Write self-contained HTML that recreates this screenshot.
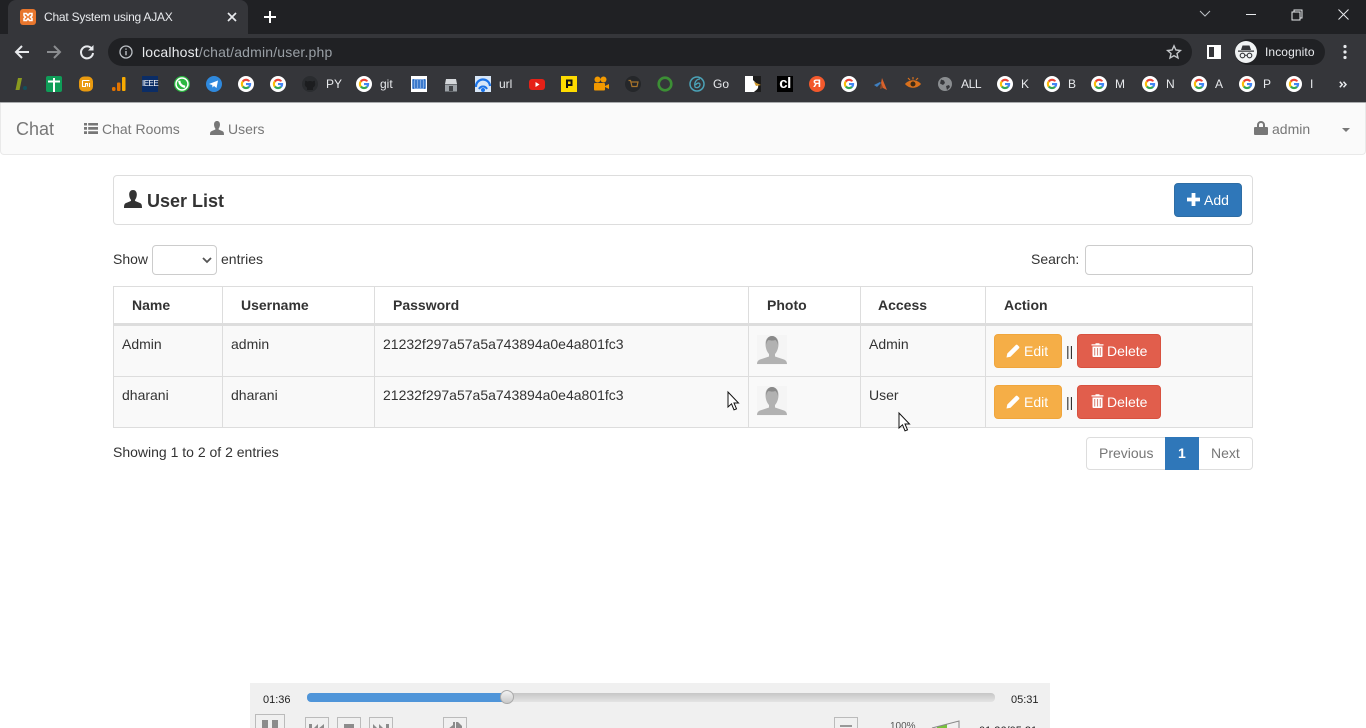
<!DOCTYPE html>
<html><head><meta charset="utf-8"><title>Chat System using AJAX</title>
<style>
*{box-sizing:border-box}
html{margin:0;padding:0;width:1366px;height:728px;overflow:hidden;background:#fff}
body{margin:0;padding:0;position:relative;width:1366px;height:728px;overflow:hidden;background:#fff;font-family:"Liberation Sans",sans-serif;font-size:14px;color:#333}
.a{position:absolute;white-space:nowrap}
.t{position:absolute;white-space:nowrap;line-height:20px}
svg{position:absolute;display:block;overflow:visible}
.bm{position:absolute;top:74px;color:#e8eaed;font-size:12px;line-height:20px;white-space:nowrap}
.th{position:absolute;top:295px;font-weight:bold;line-height:20px;color:#333}
.vl{position:absolute;width:1px;background:#ddd}
.btn{position:absolute;height:34px;border-radius:4px;color:#fff;line-height:32px;border:1px solid}
</style></head><body>
<svg width="0" height="0" style="position:absolute"><defs>
<symbol id="g" viewBox="0 0 16 16">
<circle cx="8" cy="8" r="8" fill="#fff"/>
<path d="M12.2 5A5 5 0 0 0 4 4.7L5.6 6.2A3 3 0 0 1 10.300 5.800Z" fill="#ea4335"/>
<path d="M4 4.700A5.200 5.200 0 0 0 4 11.300L5.700 9.900A3 3 0 0 1 5.600 6.200Z" fill="#fbbc05"/>
<path d="M4 11.300A5.200 5.200 0 0 0 11.800 11.500L10.100 10.100A3 3 0 0 1 5.700 9.900Z" fill="#34a853"/>
<path d="M13.100 7H8V9.100H10.900A2.700 2.700 0 0 1 10.100 10.100L11.800 11.500A5.200 5.200 0 0 0 13.100 7Z" fill="#4285f4"/>
</symbol>
<symbol id="u" viewBox="0 0 16 16"><path d="M4.600 4C4.600 1.500 6 0 8 0s3.400 1.500 3.400 4c0 2-.8 3.800-1.600 4.800-.2.500 0 .9.400 1.100l4 1.700c1.300.6 1.800 1.500 1.800 4.400H0c0-2.900.5-3.800 1.800-4.400l4-1.700c.4-.2.600-.6.400-1.100C5.400 7.800 4.600 6 4.600 4Z" fill="currentColor"/></symbol>
<symbol id="p" viewBox="0 0 30 30"><rect width="30" height="30" fill="#f5f5f5"/><path d="M8.500 9C8.500 3.500 11.500 1 15 1s6.500 2.500 6.500 8c0 4-1.500 8-3.500 10v2.500l9 3c1.500.6 3 2 3 4.500H0c0-2.500 1.500-3.900 3-4.500l9-3V19c-2-2-3.500-6-3.500-10Z" fill="#b2b2b2"/><path d="M9 10C9 4 11.500 1 15 1s6 3 6 9c-.7-3-1.700-4.500-2.700-5-2 .8-5 .8-6.700 0-1 .6-1.900 2-2.600 5Z" fill="#8a8a8a"/></symbol>
<symbol id="pen" viewBox="0 0 14 14"><path d="M.5 13.500l.8-4L9.800 1c.5-.5 1.200-.5 1.700 0l1.500 1.500c.5.500.5 1.200 0 1.700L4.500 12.700Z" fill="#fff"/></symbol>
<symbol id="tr" viewBox="0 0 13 14"><path d="M4.500 1.200V.3h4v.9h4v1.300H.5V1.200ZM1.500 3.500h10V13a1 1 0 0 1-1 1h-8a1 1 0 0 1-1-1Z" fill="#fff"/><path d="M3.700 5v7.500M6.500 5v7.500M9.300 5v7.500" stroke="#d9887c" stroke-width="1.100"/></symbol>
</defs></svg>

<!-- tab strip -->
<div class="a" style="left:0;top:0;width:1366px;height:34px;background:#202124"></div>
<div class="a" style="left:8px;top:0;width:240px;height:34px;background:#35363a;border-radius:8px 8px 0 0"></div>
<div class="a" style="left:20px;top:9px;width:16px;height:16px;background:#e8762d;border-radius:3px"></div>
<svg style="left:20px;top:9px" width="16" height="16"><path d="M4 4.500h2.500L8 6.500l1.500-2H12v2.300L10.500 8l1.500 1.500v2H9.500L8 9.500l-1.500 2H4V9.500L5.500 8 4 6.800Z" fill="none" stroke="#fff" stroke-width="1.500"/></svg>
<div class="t" style="left:44px;top:7px;font-size:12px;color:#e8eaed;letter-spacing:-.22px">Chat System using AJAX</div>
<svg style="left:227px;top:12px" width="10" height="10"><path d="M1 1l8 8M9 1l-8 8" stroke="#e8eaed" stroke-width="1.700"/></svg>
<svg style="left:264px;top:11px" width="12" height="12"><path d="M6 0v12M0 6h12" stroke="#fff" stroke-width="2"/></svg>
<svg style="left:1199px;top:10px" width="12" height="8"><path d="M1 1l5 5 5-5" fill="none" stroke="#bdc1c6" stroke-width="1"/></svg>
<div class="a" style="left:1246px;top:14px;width:10px;height:1px;background:#e8eaed"></div>
<svg style="left:1291px;top:9px" width="12" height="12"><path d="M3 2.500V1h8v8H9.500M1 3h8v8H1Z" fill="none" stroke="#e8eaed" stroke-width="1"/></svg>
<svg style="left:1338px;top:9px" width="11" height="11"><path d="M.5.500l10 10M10.500.500l-10 10" stroke="#e8eaed" stroke-width="1"/></svg>

<!-- toolbar -->
<div class="a" style="left:0;top:34px;width:1366px;height:68px;background:#35363a"></div>
<svg style="left:14px;top:44px" width="16" height="16"><path d="M15 8H2M8 2L2 8l6 6" fill="none" stroke="#e8eaed" stroke-width="2"/></svg>
<svg style="left:46px;top:44px" width="16" height="16"><path d="M1 8h13M8 2l6 6-6 6" fill="none" stroke="#8b8d90" stroke-width="2"/></svg>
<svg style="left:79px;top:44px" width="16" height="16"><path d="M13 5A6 6 0 1 0 14 9" fill="none" stroke="#e8eaed" stroke-width="2"/><path d="M14.500 1v5.500H9Z" fill="#e8eaed"/></svg>
<div class="a" style="left:108px;top:38px;width:1084px;height:28px;background:#202124;border-radius:14px"></div>
<svg style="left:119px;top:45px" width="14" height="14"><circle cx="7" cy="7" r="6" fill="none" stroke="#bdc1c6" stroke-width="1.300"/><path d="M7 6v4.300M7 3.500v1.300" stroke="#bdc1c6" stroke-width="1.400"/></svg>
<div class="t" style="left:142px;top:42px;font-size:14px;color:#9aa0a6;letter-spacing:.18px"><span style="color:#e8eaed">localhost</span>/chat/admin/user.php</div>
<svg style="left:1166px;top:44px" width="16" height="16"><path d="M8 1.800l1.900 4.200 4.500.5-3.400 3 1 4.500L8 11.700 4 14l1-4.500-3.400-3 4.500-.5Z" fill="none" stroke="#c4c7ca" stroke-width="1.400"/></svg>
<div class="a" style="left:1207px;top:45px;width:14px;height:14px;border:2px solid #fff;border-right-width:7px;background:#35363a"></div>
<div class="a" style="left:1235px;top:39px;width:90px;height:26px;background:#202124;border-radius:13px"></div>
<div class="a" style="left:1235px;top:41px;width:22px;height:22px;background:#f1f3f4;border-radius:50%"></div>
<svg style="left:1238px;top:45px" width="16" height="14"><path d="M3 5l1.500-4.500h7L13 5ZM0 5.500h16v1.300H0Z" fill="#35363a"/><circle cx="4.500" cy="10.500" r="2.300" fill="none" stroke="#35363a" stroke-width="1.100"/><circle cx="11.500" cy="10.500" r="2.300" fill="none" stroke="#35363a" stroke-width="1.100"/><path d="M6.800 10.300h2.400" stroke="#35363a"/></svg>
<div class="t" style="left:1265px;top:42px;font-size:12px;color:#e8eaed;letter-spacing:.1px">Incognito</div>
<svg style="left:1343px;top:44px" width="4" height="16"><circle cx="2" cy="2.500" r="1.600" fill="#e8eaed"/><circle cx="2" cy="8" r="1.600" fill="#e8eaed"/><circle cx="2" cy="13.500" r="1.600" fill="#e8eaed"/></svg>

<!-- bookmarks -->
<svg style="left:14px;top:76px" width="16" height="16"><path d="M4 2h4L5.500 14h-4Z" fill="#8a9a1f"/><circle cx="11" cy="12" r="2" fill="#134f5c"/></svg>
<div class="a" style="left:46px;top:76px;width:16px;height:16px;background:#0f9d58;border-radius:2px"></div>
<svg style="left:46px;top:76px" width="16" height="16"><path d="M2 5.500h12M8 2v14" stroke="#fff" stroke-width="2"/></svg>
<svg style="left:79px;top:76px" width="15" height="16"><rect x="0" y="0.500" width="14" height="15" rx="5" fill="#e99a0f"/><path d="M3.500 4.500h7M3.500 4.500v6h3v-3h2v3M10.500 7v4" fill="none" stroke="#fff" stroke-width="1.100"/></svg>
<svg style="left:111px;top:76px" width="16" height="16"><rect x="1" y="11" width="3.500" height="4" rx="1.500" fill="#e37400"/><rect x="6" y="6.500" width="3.500" height="8.500" rx="1" fill="#e37400"/><rect x="11" y="1" width="3.500" height="14" rx="1" fill="#f9ab00"/></svg>
<div class="a" style="left:142px;top:76px;width:16px;height:16px;background:#0b2d66;color:#fff;font-size:8px;line-height:16px;text-align:center;letter-spacing:-.5px">IEEE</div>
<svg style="left:174px;top:76px" width="16" height="16"><circle cx="8" cy="8" r="8" fill="#2bb741"/><circle cx="8" cy="8" r="6" fill="none" stroke="#fff" stroke-width="1.500"/><path d="M5.300 4.800c0 3.200 2.700 5.900 5.900 5.900" stroke="#fff" stroke-width="2.200" fill="none"/></svg>
<svg style="left:206px;top:76px" width="16" height="16"><circle cx="8" cy="8" r="8" fill="#2f89dd"/><path d="M3 8l9-3.500-1.500 7.500-2.500-2-1.500 1.500-.3-2.500Z" fill="#fff"/></svg>
<svg style="left:238px;top:76px" width="16" height="16"><use href="#g"/></svg>
<svg style="left:270px;top:76px" width="16" height="16"><use href="#g"/></svg>
<svg style="left:302px;top:76px" width="16" height="16"><circle cx="8" cy="8" r="8" fill="#2a2c2f"/><path d="M5 14v-2.500c-2-1-2.500-3-2-4.500.200-.7 0-1.500.200-2.300 1-.100 1.800.500 2.300.800a7 7 0 0 1 5 0c.5-.3 1.300-.9 2.300-.8.200.8 0 1.600.2 2.300.5 1.500 0 3.500-2 4.500V14Z" fill="#1c1d1f"/></svg>
<div class="bm" style="left:326px">PY</div>
<svg style="left:356px;top:76px" width="16" height="16"><use href="#g"/></svg>
<div class="bm" style="left:380px">git</div>
<div class="a" style="left:411px;top:76px;width:16px;height:16px;background:#fff"></div>
<svg style="left:411px;top:76px" width="16" height="16"><rect x="2" y="3" width="12" height="10" fill="#7fa9e2"/><path d="M3 4H2v8h1M13 4h1v8h-1M5 4v8M8 4v8M11 4v8" fill="none" stroke="#1f66c4" stroke-width="1.400"/></svg>
<svg style="left:444px;top:78px" width="14" height="14"><path d="M2 1h10l1 5H1Z" fill="#d5d8db"/><rect x="1" y="6.500" width="12" height="7" fill="#9ca1a6"/><rect x="5" y="8" width="4" height="5" fill="#404347"/></svg>
<svg style="left:475px;top:76px" width="16" height="16"><rect width="16" height="16" fill="#d7e6f7"/><path d="M1 11a7 7 0 0 1 14-1" fill="none" stroke="#1a73e8" stroke-width="2.200"/><path d="M4 13a4.500 4.500 0 0 1 8 0" fill="none" stroke="#1a73e8" stroke-width="2"/><circle cx="8" cy="14" r="2" fill="#1a73e8"/></svg>
<div class="bm" style="left:499px">url</div>
<div class="a" style="left:529px;top:79px;width:16px;height:11px;background:#e62117;border-radius:3px"></div>
<svg style="left:529px;top:79px" width="16" height="11"><path d="M6.500 3l4 2.500-4 2.500Z" fill="#fff"/></svg>
<div class="a" style="left:561px;top:76px;width:16px;height:16px;background:#fedb00"></div>
<svg style="left:561px;top:76px" width="16" height="16"><path d="M6 12V4.500h4.500V9H6" fill="none" stroke="#111" stroke-width="2"/></svg>
<svg style="left:593px;top:76px" width="16" height="16"><circle cx="4.500" cy="3.500" r="3" fill="#f29900"/><circle cx="10.500" cy="3.500" r="3" fill="#f29900"/><rect x="1" y="7" width="11" height="7.500" rx="1" fill="#f29900"/><path d="M12 10l4-2v5l-4-2Z" fill="#f29900"/></svg>
<svg style="left:625px;top:76px" width="16" height="16"><circle cx="8" cy="8" r="8" fill="#25272a"/><path d="M3.500 4.500h2l1.500 6h5l1-4.500H6" fill="none" stroke="#a8742a" stroke-width="1.200"/></svg>
<svg style="left:657px;top:76px" width="16" height="16"><circle cx="8" cy="8" r="6.300" fill="none" stroke="#3c8f35" stroke-width="2.600"/></svg>
<svg style="left:689px;top:76px" width="16" height="16"><circle cx="8" cy="8" r="7" fill="none" stroke="#4ba3b8" stroke-width="1.500"/><path d="M11 3C7 3 5 7 6 11c2 1.500 5 0 5-2.500C11 6.500 8 6.500 6.500 9" fill="none" stroke="#4ba3b8" stroke-width="1.300"/></svg>
<div class="bm" style="left:713px">Go</div>
<div class="a" style="left:745px;top:76px;width:16px;height:16px;background:#fff"></div>
<svg style="left:745px;top:76px" width="16" height="16"><path d="M8 0h8v16H9c2-2 5-3 4-7L8 4Z" fill="#1c1c1c"/><path d="M9 6l7 3-5 1Z" fill="#d29a2c"/></svg>
<div class="a" style="left:777px;top:76px;width:16px;height:16px;background:#000;color:#fff;font-size:15px;font-weight:bold;line-height:15px;text-align:center;letter-spacing:-.5px">cl</div>
<div class="a" style="left:809px;top:76px;width:16px;height:16px;background:#f3592c;border-radius:50%;color:#fff;font-size:11px;font-weight:bold;line-height:16px;text-align:center">Я</div>
<svg style="left:841px;top:76px" width="16" height="16"><use href="#g"/></svg>
<svg style="left:873px;top:76px" width="16" height="16"><path d="M9 2l5 12-4-2-2-5Z" fill="#d9622b"/><path d="M1 9l6-3 1 1-4 4Z" fill="#3f7fbf"/><path d="M8 7l2 5-3 1Z" fill="#8d4a2a"/></svg>
<svg style="left:905px;top:77px" width="16" height="14"><path d="M0 7C4 2 12 2 16 7 12 12 4 12 0 7Z" fill="#d8701c"/><circle cx="8" cy="7" r="2.500" fill="#3b2a15"/><path d="M3 1l2 2M8 0v2.500M13 1l-2 2" stroke="#d8701c" stroke-width="1.200"/></svg>
<svg style="left:938px;top:77px" width="14" height="14"><circle cx="7" cy="7" r="7" fill="#8a8d90"/><path d="M3 2.500l3 1 1 2.500-2 2-3-1.500ZM8 9l3-1 1 2-3 3Z" fill="#35363a"/></svg>
<div class="bm" style="left:961px;letter-spacing:-.4px">ALL</div>
<svg style="left:997px;top:76px" width="16" height="16"><use href="#g"/></svg><div class="bm" style="left:1021px">K</div>
<svg style="left:1044px;top:76px" width="16" height="16"><use href="#g"/></svg><div class="bm" style="left:1068px">B</div>
<svg style="left:1091px;top:76px" width="16" height="16"><use href="#g"/></svg><div class="bm" style="left:1115px">M</div>
<svg style="left:1142px;top:76px" width="16" height="16"><use href="#g"/></svg><div class="bm" style="left:1166px">N</div>
<svg style="left:1191px;top:76px" width="16" height="16"><use href="#g"/></svg><div class="bm" style="left:1215px">A</div>
<svg style="left:1239px;top:76px" width="16" height="16"><use href="#g"/></svg><div class="bm" style="left:1263px">P</div>
<svg style="left:1286px;top:76px" width="16" height="16"><use href="#g"/></svg><div class="bm" style="left:1310px">I</div>
<svg style="left:1339px;top:81px" width="8" height="7"><path d="M.8.700l2.500 2.800L.8 6.300M4.500.700l2.500 2.800-2.500 2.800" fill="none" stroke="#e8eaed" stroke-width="1.500"/></svg>
<div class="a" style="left:0;top:102px;width:1366px;height:1px;background:#a9abad"></div>

<!-- navbar -->
<div class="a" style="left:0;top:103px;width:1366px;height:52px;background:#fafafa;border:1px solid #e9e9e9;border-top:0;border-radius:0 0 4px 4px"></div>
<div class="t" style="left:16px;top:119px;font-size:18px;color:#777">Chat</div>
<svg style="left:84px;top:122px" width="14" height="13"><path d="M0 1h3v2.500H0ZM4.200 1H14v2.500H4.200ZM0 5h3v2.800H0ZM4.200 5H14v2.800H4.200ZM0 9.300h3V12H0ZM4.200 9.300H14V12H4.200Z" fill="#777"/></svg>
<div class="t" style="left:102px;top:119px;color:#777">Chat Rooms</div>
<svg style="left:210px;top:121px;color:#777" width="14" height="14"><use href="#u"/></svg>
<div class="t" style="left:228px;top:119px;color:#777">Users</div>
<svg style="left:1254px;top:121px" width="14" height="14"><path d="M3 6V4a4 4 0 0 1 8 0v2h2a1 1 0 0 1 1 1v6a1 1 0 0 1-1 1H1a1 1 0 0 1-1-1V7a1 1 0 0 1 1-1ZM5 6h4V4a2 2 0 0 0-4 0Z" fill="#777"/></svg>
<div class="t" style="left:1272px;top:119px;color:#777">admin</div>
<svg style="left:1342px;top:128px" width="8" height="4"><path d="M0 0h8L4 4Z" fill="#777"/></svg>

<!-- heading panel -->
<div class="a" style="left:113px;top:175px;width:1140px;height:50px;border:1px solid #ddd;border-radius:4px;background:#fff"></div>
<svg style="left:124px;top:190px;color:#333" width="18" height="18"><use href="#u"/></svg>
<div class="a" style="left:147px;top:190px;font-size:18px;font-weight:bold;line-height:22px;color:#333">User List</div>
<div class="a" style="left:1174px;top:183px;width:68px;height:34px;background:#2f77b9;border:1px solid #2e6da4;border-radius:4px"></div>
<svg style="left:1187px;top:193px" width="13" height="13"><path d="M6.500 0v13M0 6.500h13" stroke="#fff" stroke-width="3.800"/></svg>
<div class="t" style="left:1204px;top:190px;color:#fff">Add</div>

<!-- controls -->
<div class="t" style="left:113px;top:249px">Show</div>
<div class="a" style="left:152px;top:245px;width:65px;height:30px;border:1px solid #ccc;border-radius:4px;background:#fff"></div>
<svg style="left:202px;top:257px" width="10" height="7"><path d="M1 1l4 4 4-4" fill="none" stroke="#555" stroke-width="1.800"/></svg>
<div class="t" style="left:221px;top:249px">entries</div>
<div class="t" style="left:1031px;top:249px">Search:</div>
<div class="a" style="left:1085px;top:245px;width:168px;height:30px;border:1px solid #ccc;border-radius:4px;background:#fff"></div>

<!-- table -->
<div class="a" style="left:113px;top:326px;width:1140px;height:101px;background:#f9f9f9"></div>
<div class="a" style="left:113px;top:286px;width:1140px;height:1px;background:#ddd"></div>
<div class="a" style="left:113px;top:323px;width:1140px;height:3px;background:#ddd"></div>
<div class="a" style="left:113px;top:376px;width:1140px;height:1px;background:#ddd"></div>
<div class="a" style="left:113px;top:427px;width:1140px;height:1px;background:#ddd"></div>
<div class="vl" style="left:113px;top:286px;height:142px"></div>
<div class="vl" style="left:222px;top:286px;height:142px"></div>
<div class="vl" style="left:374px;top:286px;height:142px"></div>
<div class="vl" style="left:748px;top:286px;height:142px"></div>
<div class="vl" style="left:860px;top:286px;height:142px"></div>
<div class="vl" style="left:985px;top:286px;height:142px"></div>
<div class="vl" style="left:1252px;top:286px;height:142px"></div>
<div class="th" style="left:132px">Name</div>
<div class="th" style="left:241px">Username</div>
<div class="th" style="left:393px">Password</div>
<div class="th" style="left:767px">Photo</div>
<div class="th" style="left:878px">Access</div>
<div class="th" style="left:1004px">Action</div>

<div class="t" style="left:122px;top:334px">Admin</div>
<div class="t" style="left:231px;top:334px">admin</div>
<div class="t" style="left:383px;top:334px">21232f297a57a5a743894a0e4a801fc3</div>
<svg style="left:757px;top:335px" width="30" height="30"><use href="#p"/></svg>
<div class="t" style="left:869px;top:334px">Admin</div>
<div class="btn" style="left:994px;top:334px;width:68px;background:#f5ae47;border-color:#f0a63c"></div>
<svg style="left:1006px;top:344px" width="14" height="14"><use href="#pen"/></svg>
<div class="t" style="left:1024px;top:341px;color:#fff">Edit</div>
<div class="t" style="left:1066px;top:341px">||</div>
<div class="btn" style="left:1077px;top:334px;width:84px;background:#e15e4c;border-color:#d8513f"></div>
<svg style="left:1091px;top:343px" width="13" height="14"><use href="#tr"/></svg>
<div class="t" style="left:1107px;top:341px;color:#fff">Delete</div>

<div class="t" style="left:122px;top:385px">dharani</div>
<div class="t" style="left:231px;top:385px">dharani</div>
<div class="t" style="left:383px;top:385px">21232f297a57a5a743894a0e4a801fc3</div>
<svg style="left:757px;top:386px" width="30" height="30"><use href="#p"/></svg>
<div class="t" style="left:869px;top:385px">User</div>
<div class="btn" style="left:994px;top:385px;width:68px;background:#f5ae47;border-color:#f0a63c"></div>
<svg style="left:1006px;top:395px" width="14" height="14"><use href="#pen"/></svg>
<div class="t" style="left:1024px;top:392px;color:#fff">Edit</div>
<div class="t" style="left:1066px;top:392px">||</div>
<div class="btn" style="left:1077px;top:385px;width:84px;background:#e15e4c;border-color:#d8513f"></div>
<svg style="left:1091px;top:394px" width="13" height="14"><use href="#tr"/></svg>
<div class="t" style="left:1107px;top:392px;color:#fff">Delete</div>

<!-- cursors -->
<svg style="left:727px;top:391px" width="13" height="21"><path d="M1 1v15l3.500-3.200 2.500 6 2.500-1-2.500-5.800h4.500Z" fill="#fff" stroke="#111" stroke-width="1"/></svg>
<svg style="left:898px;top:412px" width="13" height="21"><path d="M1 1v15l3.500-3.200 2.500 6 2.500-1-2.500-5.800h4.500Z" fill="#fff" stroke="#111" stroke-width="1"/></svg>

<!-- footer -->
<div class="t" style="left:113px;top:442px">Showing 1 to 2 of 2 entries</div>
<div class="a" style="left:1086px;top:437px;width:167px;height:33px;border:1px solid #ddd;border-radius:4px;background:#fff"></div>
<div class="a" style="left:1165px;top:437px;width:34px;height:33px;background:#2f77b9"></div>
<div class="t" style="left:1099px;top:443px;color:#777">Previous</div>
<div class="t" style="left:1178px;top:443px;color:#fff;font-weight:bold">1</div>
<div class="t" style="left:1211px;top:443px;color:#777">Next</div>

<!-- media player -->
<div class="a" style="left:250px;top:683px;width:800px;height:45px;background:#f0f0f0"></div>
<div class="a" style="left:263px;top:690px;font-size:11px;line-height:20px;color:#222">01:36</div>
<div class="a" style="left:307px;top:693px;width:688px;height:9px;border-radius:4px;background:linear-gradient(#c6c6c6,#e4e4e4)"></div>
<div class="a" style="left:307px;top:693px;width:200px;height:9px;border-radius:4px 0 0 4px;background:#4f95d9"></div>
<div class="a" style="left:500px;top:690px;width:14px;height:14px;border-radius:50%;background:linear-gradient(#f2f2f2,#c9c9c9);border:1px solid #aaa"></div>
<div class="a" style="left:1011px;top:690px;font-size:11px;line-height:20px;color:#222">05:31</div>

<div class="a" style="left:255px;top:714px;width:30px;height:20px;border:1px solid #bbb;background:#f0f0f0"></div>
<div class="a" style="left:262px;top:720px;width:6px;height:12px;background:#8c8c8c"></div>
<div class="a" style="left:272px;top:720px;width:6px;height:12px;background:#8c8c8c"></div>
<div class="a" style="left:305px;top:717px;width:24px;height:16px;border:1px solid #bbb"></div>
<svg style="left:309px;top:724px" width="16" height="5"><path d="M0 0h3v5H0ZM9 0v5L4 5ZM15 0v5l-6 0Z" fill="#8c8c8c"/></svg>
<div class="a" style="left:337px;top:717px;width:24px;height:16px;border:1px solid #bbb"></div>
<div class="a" style="left:344px;top:724px;width:10px;height:5px;background:#8c8c8c"></div>
<div class="a" style="left:369px;top:717px;width:24px;height:16px;border:1px solid #bbb"></div>
<svg style="left:373px;top:724px" width="16" height="5"><path d="M0 0l5 5H0ZM6 0l5 5H6ZM13 0h3v5h-3Z" fill="#8c8c8c"/></svg>
<div class="a" style="left:443px;top:717px;width:24px;height:16px;border:1px solid #bbb"></div>
<svg style="left:448px;top:722px" width="14" height="7"><path d="M5 0h2v7H0l5-4ZM8 0h2l4 4v3H8Z" fill="#8c8c8c"/></svg>
<div class="a" style="left:834px;top:717px;width:24px;height:16px;border:1px solid #bbb"></div>
<div class="a" style="left:840px;top:725px;width:12px;height:2px;background:#999"></div>
<div class="a" style="left:890px;top:721px;font-size:10px;line-height:12px;color:#555">100%</div>
<svg style="left:930px;top:720px" width="32" height="10"><path d="M7 6.700L17 4.300V10H7Z" fill="#78c23c"/><path d="M2 8L29 1v9" fill="none" stroke="#888" stroke-width="1"/></svg>
<div class="a" style="left:979px;top:724px;font-size:11px;line-height:14px;color:#222">01:36/05:31</div>
</body></html>
